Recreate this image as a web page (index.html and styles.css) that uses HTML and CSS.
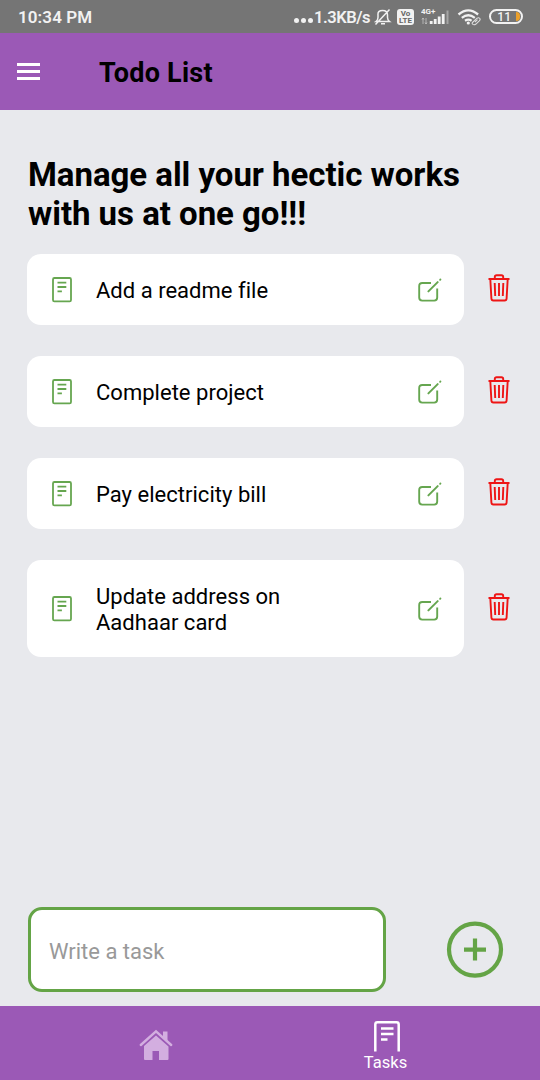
FILE: index.html
```html
<!DOCTYPE html>
<html lang="en">
<head>
<meta charset="utf-8">
<title>Todo List</title>
<link rel="stylesheet" href="styles.css">
</head>
<body>
<svg class="defs" width="0" height="0" aria-hidden="true">
  <symbol id="note" viewBox="0 0 20 26">
    <rect x="1" y="1" width="18" height="23.4" rx="1.4" stroke-width="1.8"/>
    <path d="M5.500 5.700h8.800M5.500 10h8.800M5.500 14.300h4.400" stroke-width="1.8"/>
  </symbol>
  <symbol id="edit" viewBox="0 0 24 24">
    <path d="M13 5H4.200Q1.200 5 1.200 8v11.600q0 3 3 3h12q3 0 3-3V10.500" stroke-width="1.900"/>
    <path d="M10.400 13.400 19.700 4.100" stroke-width="2" stroke-linecap="round"/>
    <path d="M22.100 1.800l.3-.3" stroke-width="1.900" stroke-linecap="round"/>
  </symbol>
  <symbol id="trash" viewBox="0 0 22 28">
    <path d="M.5 5h21M6.800 5V3q0-1.800 1.800-1.800h4.800q1.800 0 1.800 1.800v2M2.300 5l1.100 19.500q.1 2 2 2h11.200q1.900 0 2-2L19.700 5M6.700 9l.5 13M11 9v13M15.300 9l-.5 13" stroke-width="1.900"/>
  </symbol>
</svg>
<header class="status">
  <span class="clock">10:34 PM</span>
  <span class="dots"><i></i><i></i><i></i></span>
  <span class="speed">1.3KB/s</span>
  <svg class="bell" width="18" height="18" viewBox="0 0 18 18"><path d="M2 13.500h13.500q-2-1.500-2-4V7q0-4.500-5-4.500T4 7v2.500q0 2.500-2 4zM7 15.800h4M1.500 16.500 15.500 1.500"/></svg>
  <span class="volte"><b>Vo</b><b>LTE</b></span>
  <svg class="signal" width="28" height="20" viewBox="0 0 28 20"><text x="0" y="7">4G+</text><path class="arrows" d="M2 17v-6m-1 1.500L2 11l1 1.500M5 11v6m-1-1.500L5 17l1-1.500"/><path class="bars" d="M10.200 17v-3M14.200 17v-5M18.200 17V9.500M22.200 17V7"/><path class="bars weak" d="M26.500 17V3.500"/></svg>
  <svg class="wifi" width="24" height="18" viewBox="0 0 24 18"><path d="M1.500 6.500q9.800-8.200 19.600 0M4.800 9.800q6.500-5 13 0M8 12.800q3.300-2.200 6.600 0"/><circle cx="11.300" cy="15" r="1.600"/><path class="link" d="m15.500 14.500 4.500-4.300q2-1.200 3 .5.500 1-.7 2.200l-3.600 3.400q-2 1-3.200-.3-.7-.7 0-1.500zM18 14l2.500-2.300"/></svg>
  <span class="battery">11<i></i></span>
</header>
<div class="appbar">
  <div class="burger"><i></i><i></i><i></i></div>
  <h1 class="title">Todo List</h1>
</div>
<main class="page">
  <h2 class="headline">Manage all your hectic works with us at one go!!!</h2>
  <ul class="tasks">
    <li class="row"><div class="card"><svg class="note"><use href="#note"/></svg><span class="label">Add a readme file</span><svg class="edit"><use href="#edit"/></svg></div><svg class="trash"><use href="#trash"/></svg></li>
    <li class="row"><div class="card"><svg class="note"><use href="#note"/></svg><span class="label">Complete project</span><svg class="edit"><use href="#edit"/></svg></div><svg class="trash"><use href="#trash"/></svg></li>
    <li class="row"><div class="card"><svg class="note"><use href="#note"/></svg><span class="label">Pay electricity bill</span><svg class="edit"><use href="#edit"/></svg></div><svg class="trash"><use href="#trash"/></svg></li>
    <li class="row"><div class="card"><svg class="note"><use href="#note"/></svg><span class="label">Update address on<br>Aadhaar card</span><svg class="edit"><use href="#edit"/></svg></div><svg class="trash"><use href="#trash"/></svg></li>
  </ul>
  <div class="composer">
    <div class="field">Write a task</div>
    <svg class="add" width="58" height="58" viewBox="0 0 58 58"><circle cx="29" cy="28.600" r="26" stroke-width="4.200"/><path d="M18 28.600h22M29 17.600v22" stroke-width="4.200"/></svg>
  </div>
</main>
<nav class="tabs">
  <div class="tab home"><svg width="34" height="32" viewBox="0 0 34 32"><path d="M5 17 17 6.500 29.500 17.500V30a1 1 0 0 1-1 1H20v-9h-6.500v9H6a1 1 0 0 1-1-1z"/><path d="M24 2.500h4.500v10.500L24 9z"/><path class="roof" d="M1.800 16 17 2.300 32.200 16"/></svg></div>
  <div class="tab current"><svg width="26" height="31" viewBox="0 0 26 31"><path d="M1.300 30.500V3.500q0-2.200 2.200-2.200h19q2.200 0 2.200 2.200v27"/><path d="M7 7.500h12.500M7 13h12.500M7 18.500h6.500"/></svg><span class="tab-label">Tasks</span></div>
</nav>
</body>
</html>
```
FILE: styles.css
```css
* { box-sizing: border-box; }
body {
  margin: 0;
  width: 540px;
  height: 1080px;
  display: flex;
  flex-direction: column;
  overflow: hidden;
  background: #e8e9ed;
  color: #000;
  font-family: Roboto, sans-serif;
}
svg { display: block; flex: none; fill: none; }
.defs { position: absolute; }
.status {
  height: 33px;
  flex: none;
  display: flex;
  align-items: center;
  padding: 0 17px 0 18px;
  background: #757575;
  color: #f2f2f2;
  font-size: 17px;
  font-weight: 500;
}
.clock { flex: 1; font-weight: 600; letter-spacing: .1px; }
.dots { display: flex; gap: 2px; margin: 8px 1px 0 0; }
.dots i { width: 5px; height: 5px; border-radius: 50%; background: #f2f2f2; }
.speed { width: 57px; padding-top: 1px; white-space: nowrap; font-size: 16.500px; font-weight: 600; letter-spacing: -.45px; }
.bell { margin-left: 3px; stroke: #f2f2f2; stroke-width: 1.5; }
.volte {
  width: 17px;
  height: 16px;
  margin-left: 5px;
  display: flex;
  flex-direction: column;
  align-items: center;
  justify-content: center;
  border-radius: 3px;
  background: #f2f2f2;
  color: #666;
  font-size: 8px;
  line-height: 7px;
}
.signal { margin: 0 0 0 7px; }
.signal text { fill: #f2f2f2; font-size: 8px; font-weight: 700; }
.arrows { stroke: #c5c5c5; stroke-width: .8; }
.bars { stroke: #f2f2f2; stroke-width: 2.8; }
.bars.weak { stroke: #a5a5a5; stroke-width: 2; }
.wifi { margin-left: 8px; stroke: #f2f2f2; stroke-width: 2.3; }
.wifi circle { fill: #f2f2f2; stroke: none; }
.wifi .link { stroke: #ddd; stroke-width: 1.1; fill: #757575; }
.battery {
  width: 34px;
  height: 15px;
  margin-left: 8px;
  display: flex;
  align-items: center;
  justify-content: flex-end;
  gap: 5px;
  padding-right: 1px;
  border: 2px solid #f2f2f2;
  border-radius: 8px;
  font-size: 12px;
}
.battery i { width: 4px; height: 9px; background: #eaa02b; border-radius: 0 4px 4px 0; }
.appbar {
  height: 77px;
  flex: none;
  display: flex;
  align-items: center;
  padding: 2px 17px 0;
  background: #9b59b6;
}
.burger { display: flex; flex-direction: column; gap: 4px; width: 23px; margin-bottom: 2px; }
.burger i { height: 3px; background: #fff; }
.title { margin: 0 0 0 59px; font-size: 27px; line-height: 32px; font-weight: 700; letter-spacing: .25px; padding-top: 1px; }
.page { flex: 1; display: flex; flex-direction: column; padding: 46px 27px 14px; }
.headline { margin: 0 0 21px 1px; width: 450px; font-size: 33px; line-height: 38.700px; font-weight: 700; letter-spacing: -.04px; }
.tasks { list-style: none; margin: 0; padding: 0; display: flex; flex-direction: column; gap: 31px; }
.row { display: flex; align-items: center; }
.card {
  width: 437px;
  min-height: 70.700px;
  display: flex;
  align-items: center;
  padding: 22px 22.500px 22px 25px;
  border-radius: 14px;
  background: #fff;
}
.note { width: 20px; height: 26px; stroke: #66a650; }
.label { flex: 1; margin: 1px 0 -1px 24px; font-size: 22px; line-height: 26px; letter-spacing: .02px; padding-top: 1px; }
.edit { width: 24px; height: 24px; stroke: #66a650; }
.trash { width: 22px; height: 28px; margin: 0 0 3px 24px; stroke: #ee1515; }
.composer { margin-top: auto; display: flex; align-items: center; }
.field {
  width: 358px;
  height: 85px;
  margin-left: 1px;
  padding-left: 18px;
  border: 3px solid #64a446;
  border-radius: 14px;
  background: #fff;
  color: #999;
  font-size: 22px;
  line-height: 83px;
}
.add { margin-left: 60px; stroke: #64a446; }
.tabs { height: 74px; flex: none; display: flex; padding: 0 38px 0 40px; background: #9b59b6; }
.tab { flex: 1; display: flex; flex-direction: column; align-items: center; padding-top: 15px; }
.home { padding-top: 23px; }
.home svg { fill: #d3aee0; }
.home .roof { fill: none; stroke: #d3aee0; stroke-width: 2.400; stroke-linecap: round; }
.current svg { stroke: #fff; stroke-width: 2.500; }
.tab-label { margin: 1px 2px 0 0; color: #fff; font-size: 16.500px; line-height: 20px; }
```
